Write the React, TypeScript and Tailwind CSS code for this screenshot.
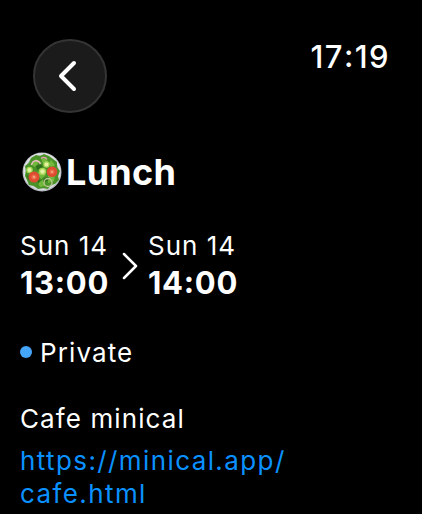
interface TimeProps {
  value: string;
}

function Time(props: TimeProps) {
  const [hours, minutes] = props.value.split(":");

  return (
    <>
      {hours}
      <span className="align-[1.5px] leading-none">:</span>
      {minutes}
    </>
  );
}

interface DateTimeProps {
  date: string;
  time: string;
}

function DateTime(props: DateTimeProps) {
  return (
    <div className="flex w-[88px] flex-col whitespace-nowrap">
      <span className="text-[26px] leading-[33px] tracking-[1px]">{props.date}</span>
      <span className="mt-0.5 text-[31px] leading-[38px] font-bold tracking-[0.7px]">
        <Time value={props.time} />
      </span>
    </div>
  );
}

function SaladIcon() {
  return (
    <svg className="-mt-0.5 shrink-0" width="40" height="40" viewBox="0 0 40 40">
      <circle cx="20" cy="20" r="19.5" fill="#b9bec3" />
      <circle cx="20" cy="19.6" r="18.4" fill="#dfe2e4" />
      <circle cx="20" cy="20" r="16.8" fill="#a9b4a8" />
      <path
        d="M9 6l5-3 4 1 4-2 5 2 4 3 4 3v5l3 4-2 5 1 4-4 4-4 1-3 4-5-1-5 1-4-3-5-1-2-5-2-4 1-5-1-5 4-3z"
        fill="#4a9328"
      />
      <path
        d="M9 12l5-5 3 3-4 5zM19 6l5-1 2 5-5 2zM29 8l4 5-4 3-2-5zM14 21l6-2 4 4-5 4zM26 24l7-2-1 7-6 2zM16 31l5-3 2 6-5 1z"
        fill="#72b83c"
      />
      <path
        d="M14 14l5-2 2 3-6 3zM22 26l5-1-1 4-5 1zM4 22l4 3-1 4zM15 27l4 1-3 4zM31 16l4 4-3 1z"
        fill="#2f701d"
      />
      <path d="M9.500 13c1-5 7-6 9-1" fill="none" stroke="#e9bcc2" strokeWidth="1.5" />
      <path d="M19 6.500c2-2 5-1 6 1" fill="none" stroke="#d99aab" strokeWidth="1.300" />
      <circle cx="26" cy="30.500" r="4" fill="none" stroke="#bfc793" strokeWidth="1.300" />
      <circle cx="7.500" cy="18" r="3.300" fill="#a2d551" />
      <circle cx="7.500" cy="18" r="2" fill="#e2f3a3" />
      <circle cx="24.500" cy="12.500" r="3.200" fill="#a2d551" />
      <circle cx="24.500" cy="12.500" r="2" fill="#e2f3a3" />
      <circle cx="20.500" cy="19.500" r="3.700" fill="#a2d551" />
      <circle cx="20.500" cy="19.500" r="2.300" fill="#e2f3a3" />
      <circle cx="12" cy="25" r="5.500" fill="#df4b31" />
      <circle cx="12" cy="25" r="2.600" fill="#ec6c4a" />
      <circle cx="12" cy="25" r="0.900" fill="#f8bd9d" />
      <circle cx="30" cy="19.800" r="5.300" fill="#df4b31" />
      <circle cx="30" cy="19.800" r="2.500" fill="#ec6c4a" />
      <circle cx="30" cy="19.800" r="0.900" fill="#f8bd9d" />
    </svg>
  );
}

export default function App() {
  return (
    <div className="h-[514px] w-[422px] overflow-hidden bg-black pl-5 font-['Inter',sans-serif] text-white">
      <header className="flex items-start justify-between pt-[38px] pr-8 pl-[13px]">
        <button
          type="button"
          aria-label="Back"
          className="mt-px flex size-[74px] items-center justify-center rounded-full border-2 border-[#343434] bg-[#1b1b1b]"
        >
          <svg className="mr-1" width="20" height="32" viewBox="0 0 20 32" fill="none">
            <path
              d="M16 3L3 16l13 13"
              stroke="white"
              strokeWidth="4"
              strokeLinecap="round"
              strokeLinejoin="round"
            />
          </svg>
        </button>
        <span className="text-[31px] leading-[38px] font-medium tracking-[1.4px]">
          <Time value="17:19" />
        </span>
      </header>

      <h1 className="mt-[38px] flex h-11 items-center gap-1 pl-0.5">
        <SaladIcon />
        <span className="-mt-0.5 text-[36px] leading-[44px] font-bold tracking-[0.3px]">Lunch</span>
      </h1>

      <div className="mt-[34px] flex items-center">
        <DateTime date="Sun 14" time="13:00" />
        <svg className="mr-2 ml-3 mt-px" width="20" height="28" viewBox="0 0 20 28" fill="none">
          <path
            d="M4 2l12 12L4 26"
            stroke="white"
            strokeWidth="2.500"
            strokeLinecap="round"
            strokeLinejoin="round"
          />
        </svg>
        <DateTime date="Sun 14" time="14:00" />
      </div>

      <div className="mt-[34px] flex items-center gap-2">
        <span className="-mt-0.5 size-3 rounded-full bg-[#45a5f8]" />
        <span className="text-[26px] leading-[33px] tracking-[1.1px]">Private</span>
      </div>

      <p className="mt-[33px] text-[26px] leading-[33px] tracking-[1.1px]">Cafe minical</p>
      <a className="mt-[9px] block text-[26px] leading-[33px] tracking-[1.4px] text-[#0a91ff]">
        https://minical.app/
        <br />
        cafe.html
      </a>
    </div>
  );
}
